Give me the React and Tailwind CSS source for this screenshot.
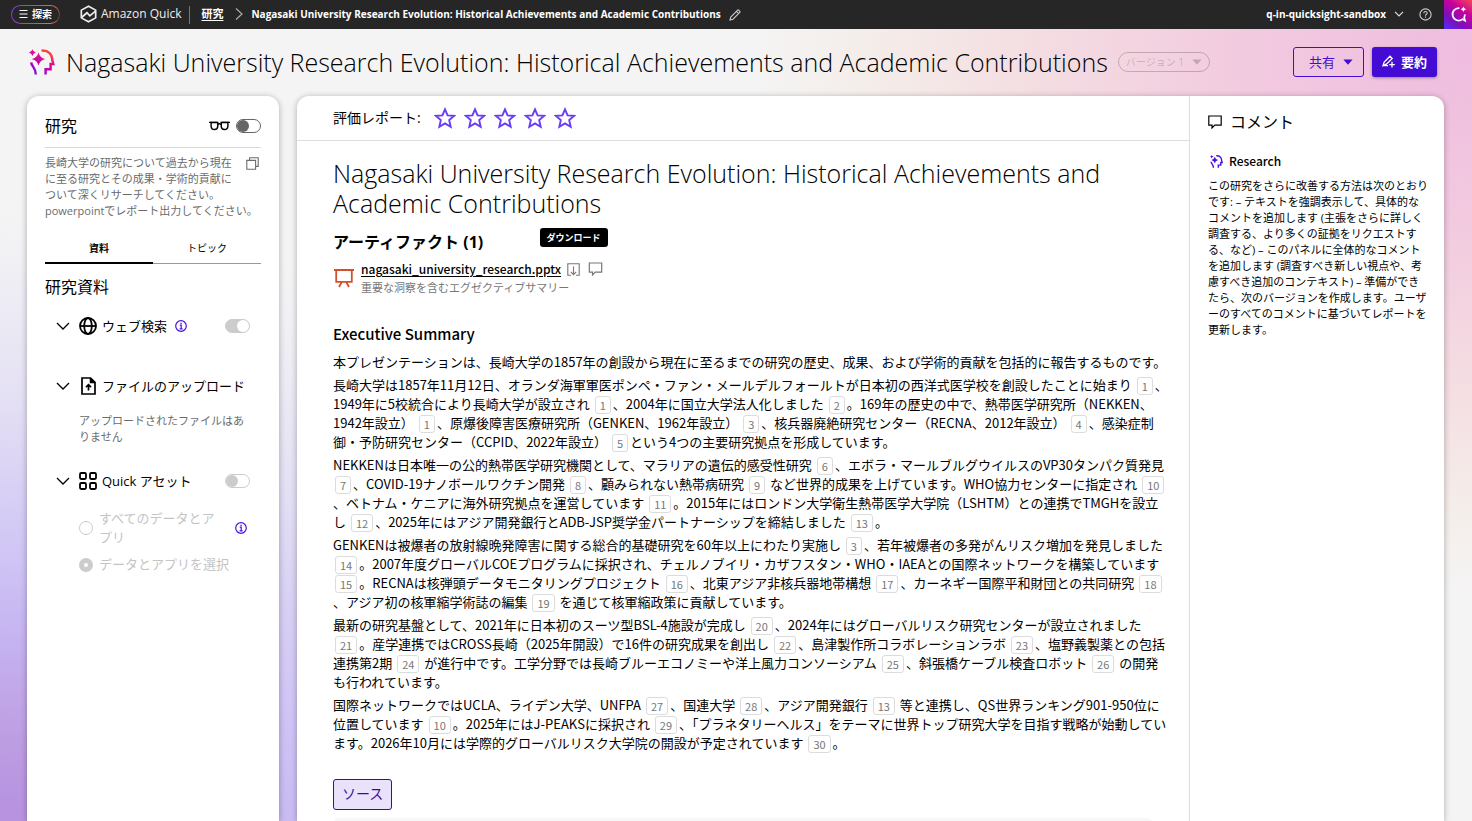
import React from "react";

const TITLE =
  "Nagasaki University Research Evolution: Historical Achievements and Academic Contributions";

// Each paragraph is a list of lines; [n] marks a citation chip.
const PARAGRAPHS = [
  [
    "本プレゼンテーションは、長崎大学の1857年の創設から現在に至るまでの研究の歴史、成果、および学術的貢献を包括的に報告するものです。",
  ],
  [
    "長崎大学は1857年11月12日、オランダ海軍軍医ポンペ・ファン・メールデルフォールトが日本初の西洋式医学校を創設したことに始まり [1]、",
    "1949年に5校統合により長崎大学が設立され [1]、2004年に国立大学法人化しました [2]。169年の歴史の中で、熱帯医学研究所（NEKKEN、",
    "1942年設立） [1]、原爆後障害医療研究所（GENKEN、1962年設立） [3]、核兵器廃絶研究センター（RECNA、2012年設立） [4]、感染症制",
    "御・予防研究センター（CCPID、2022年設立） [5]という4つの主要研究拠点を形成しています。",
  ],
  [
    "NEKKENは日本唯一の公的熱帯医学研究機関として、マラリアの遺伝的感受性研究 [6]、エボラ・マールブルグウイルスのVP30タンパク質発見",
    "[7]、COVID-19ナノボールワクチン開発 [8]、顧みられない熱帯病研究 [9] など世界的成果を上げています。WHO協力センターに指定され [10]",
    "、ベトナム・ケニアに海外研究拠点を運営しています [11]。2015年にはロンドン大学衛生熱帯医学大学院（LSHTM）との連携でTMGHを設立",
    "し [12]、2025年にはアジア開発銀行とADB-JSP奨学金パートナーシップを締結しました [13]。",
  ],
  [
    "GENKENは被爆者の放射線晩発障害に関する総合的基礎研究を60年以上にわたり実施し [3]、若年被爆者の多発がんリスク増加を発見しました",
    "[14]。2007年度グローバルCOEプログラムに採択され、チェルノブイリ・カザフスタン・WHO・IAEAとの国際ネットワークを構築しています",
    "[15]。RECNAは核弾頭データモニタリングプロジェクト [16]、北東アジア非核兵器地帯構想 [17]、カーネギー国際平和財団との共同研究 [18]",
    "、アジア初の核軍縮学術誌の編集 [19] を通じて核軍縮政策に貢献しています。",
  ],
  [
    "最新の研究基盤として、2021年に日本初のスーツ型BSL-4施設が完成し [20]、2024年にはグローバルリスク研究センターが設立されました",
    "[21]。産学連携ではCROSS長崎（2025年開設）で16件の研究成果を創出し [22]、島津製作所コラボレーションラボ [23]、塩野義製薬との包括",
    "連携第2期 [24] が進行中です。工学分野では長崎ブルーエコノミーや洋上風力コンソーシアム [25]、斜張橋ケーブル検査ロボット [26] の開発",
    "も行われています。",
  ],
  [
    "国際ネットワークではUCLA、ライデン大学、UNFPA [27]、国連大学 [28]、アジア開発銀行 [13] 等と連携し、QS世界ランキング901-950位に",
    "位置しています [10]。2025年にはJ-PEAKSに採択され [29]、「プラネタリーヘルス」をテーマに世界トップ研究大学を目指す戦略が始動してい",
    "ます。2026年10月には学際的グローバルリスク大学院の開設が予定されています [30]。",
  ],
];

const COMMENT_LINES = [
  "この研究をさらに改善する方法は次のとおり",
  "です: – テキストを強調表示して、具体的な",
  "コメントを追加します (主張をさらに詳しく",
  "調査する、より多くの証拠をリクエストす",
  "る、など) – このパネルに全体的なコメント",
  "を追加します (調査すべき新しい視点や、考",
  "慮すべき追加のコンテキスト) – 準備ができ",
  "たら、次のバージョンを作成します。ユーザ",
  "ーのすべてのコメントに基づいてレポートを",
  "更新します。",
];

function Svg({ w = 16, h, vb, sw = 1.5, className = "", children, stroke = "currentColor" }) {
  return (
    <svg
      width={w}
      height={h || w}
      viewBox={vb || `0 0 ${w} ${h || w}`}
      fill="none"
      stroke={stroke}
      strokeWidth={sw}
      className={`shrink-0 ${className}`}
      aria-hidden="true"
    >
      {children}
    </svg>
  );
}

function ResearchIcon({ size, paint, sw }) {
  return (
    <svg width={size} height={size} viewBox="0 0 26 26" fill="none" className="shrink-0" aria-hidden="true">
      <defs>
        <linearGradient id="headPaint" x1="4" y1="26" x2="20" y2="0" gradientUnits="userSpaceOnUse">
          <stop offset="0" stopColor="#5a1fe0" />
          <stop offset="0.35" stopColor="#b500c0" />
          <stop offset="0.65" stopColor="#e0108c" />
          <stop offset="0.85" stopColor="#ff4040" />
        </linearGradient>
      </defs>
      <g stroke={paint} strokeWidth={sw}>
        <path d="M12.5 1.6C19.5 1 23.4 5.6 23.2 10.8L24.4 15H21.6V20.2H16.6V25.5" />
        <path d="M2.2 13.4C2.4 17.6 6.8 18.4 6.8 25.5" />
      </g>
      <path fill={paint} d="M9.5 3.4Q10.8 8.7 16.2 10Q10.8 11.3 9.5 16.6Q8.2 11.3 2.8 10Q8.2 8.7 9.5 3.4Z" />
      <path fill={paint} d="M3.4 0.2Q4.1 2.9 6.9 3.6Q4.1 4.3 3.4 7Q2.7 4.3 0 3.6Q2.7 2.9 3.4 0.2Z" />
    </svg>
  );
}

const Chevron = ({ w = 14, h = 8, className = "" }) => (
  <Svg w={w} h={h} vb="0 0 14 8" sw={1.3} className={className}>
    <path d="M1 1l6 6 6-6" />
  </Svg>
);

const Caret = () => (
  <svg width="10" height="6" viewBox="0 0 10 6" fill="currentColor" className="shrink-0" aria-hidden="true">
    <path d="M0.4 0.4h9.2L5 5.8z" />
  </svg>
);

const InfoButton = () => (
  <button type="button" aria-label="情報" className="text-[#4a12e0]">
    <Svg w={12} vb="0 0 12 12" sw={1.2}>
      <circle cx="6" cy="6" r="5.3" />
      <path d="M4.8 5.2H6.2V8.8M4.6 8.8H7.6" />
      <path d="M5.4 3.3H6.7" />
    </Svg>
  </button>
);

const Speech = ({ w, h, className }) => (
  <Svg w={w} h={h} vb="0 0 14 14" sw={1.2} className={className}>
    <path d="M0.8 1h12.4v9.2H6.8L4 13V10.2H0.8z" />
  </Svg>
);

function Citation({ n }) {
  return (
    <button
      type="button"
      className="mx-0.5 -my-1 inline-flex h-[18px] items-center rounded-[3px] border border-[#dcdcdc] bg-white px-1 align-middle text-[11px] leading-4 text-[#777]"
    >
      {n}
    </button>
  );
}

function Line({ text }) {
  return text.split(/(\[\d+\])/).map((part, i) =>
    /^\[\d+\]$/.test(part) ? <Citation key={i} n={part.slice(1, -1)} /> : <React.Fragment key={i}>{part}</React.Fragment>
  );
}

function Lines({ lines }) {
  return lines.map((line, i) => (
    <React.Fragment key={i}>
      {i > 0 && <br />}
      <Line text={line} />
    </React.Fragment>
  ));
}

function TopBar() {
  return (
    <header className="flex h-[29px] shrink-0 items-center bg-[#262626] text-white">
      <button
        type="button"
        className="ml-[11px] rounded-full bg-[linear-gradient(100deg,#7a3fe0,#c040c8_50%,#e8705a_85%,#3a3030)] p-px"
      >
        <span className="flex h-[17px] items-center gap-1 rounded-full bg-[#262626] px-[7px] pb-px text-[10px] font-bold leading-4">
          <Svg w={9} h={8} sw={1}>
            <path d="M0.5 0.5h8M0.5 4h8M0.5 7.5h8" />
          </Svg>
          探索
        </span>
      </button>
      <a href="#home" className="ml-5 flex items-center gap-1 pb-0.5 text-[12px] leading-4 text-[#eee]">
        <Svg w={17} h={18} vb="0 0 18 19" sw={1.8}>
          <path d="M9 1.2L16.6 5.4V13.6L9 17.8L1.4 13.6V5.4Z" strokeLinejoin="round" />
          <path d="M1.6 13.2L7.4 8.2L10.4 11.4L16.4 6.4" />
        </Svg>
        Amazon Quick
      </a>
      <span className="ml-2 h-[18px] w-px bg-[#777]" />
      <nav aria-label="パンくずリスト" className="flex items-center pb-0.5">
        <a href="#research" className="ml-[11px] text-[11px] font-bold leading-4 underline underline-offset-2">
          研究
        </a>
        <Svg w={8} h={12} sw={1.2} className="ml-3 text-[#aaa]">
          <path d="M1 0.5l6 5.5-6 5.5" />
        </Svg>
        <span className="ml-2 text-[10px] font-bold leading-4">{TITLE}</span>
      </nav>
      <button type="button" aria-label="名前を編集" className="ml-2 text-[#ccc]">
        <Svg w={12} vb="0 0 12 12" sw={1.1}>
          <path d="M1 11l0.8-3L8.6 1.2a0.8 0.8 0 0 1 1.1 0l1.1 1.1a0.8 0.8 0 0 1 0 1.1L4 10.2zM7.4 2.4l2.2 2.2" />
        </Svg>
      </button>
      <button type="button" className="ml-auto flex items-center gap-2 pb-0.5 text-[10px] font-bold leading-4">
        q-in-quicksight-sandbox
        <Svg w={10} h={6} sw={1.2} className="text-[#ddd]">
          <path d="M1 0.8l4 4.2 4-4.2" />
        </Svg>
      </button>
      <button type="button" aria-label="ヘルプ" className="ml-[15px] text-[#ccc]">
        <Svg w={13} vb="0 0 13 13" sw={1.1}>
          <circle cx="6.5" cy="6.5" r="5.6" />
          <path d="M4.8 5.2C4.8 3 8.2 3 8.2 5C8.2 6.3 6.5 6.2 6.5 7.7M6.5 8.6V9.8" />
        </Svg>
      </button>
      <button
        type="button"
        aria-label="チャット"
        className="ml-3 flex h-full w-7 items-center justify-center bg-[linear-gradient(35deg,#5a2ae8_5%,#7a10c0_30%,#c8009c_65%,#f04060_95%)]"
      >
        <Svg w={17} vb="0 0 17 17" sw={1.7}>
          <path d="M9.4 2.2A6.2 6.2 0 1 0 12.6 13.2L15 14.6L14.2 11.4C14.7 10.4 14.9 9.6 14.8 8.4" />
          <path
            d="M13.4 0.4Q13.8 2.7 16.2 3.2Q13.8 3.7 13.4 6Q13 3.7 10.6 3.2Q13 2.7 13.4 0.4Z"
            fill="currentColor"
            stroke="none"
          />
        </Svg>
      </button>
    </header>
  );
}

const TOGGLE =
  "relative m-0 h-[14px] w-[25px] shrink-0 appearance-none rounded-full border before:absolute before:top-0 before:h-3 before:w-3 before:rounded-full before:content-['']";

function SourceHeader({ icon, label, children }) {
  return (
    <div className="flex h-6 items-center">
      <button type="button" aria-label={`${label}を折りたたむ`} className="mr-2 w-[14px]">
        <Chevron />
      </button>
      <span className="mr-1 flex w-5 shrink-0 justify-center">{icon}</span>
      <h3 className="mr-2 text-[13px] leading-5 whitespace-nowrap">{label}</h3>
      {children}
    </div>
  );
}

function ResearchPanel() {
  return (
    <aside className="w-[252px] shrink-0 rounded-t-xl bg-white px-[18px] pt-[18px] shadow-[0_1px_6px_rgba(0,0,0,0.3)]">
      <div className="flex h-[34px] items-start border-b border-[#d9d9d9]">
        <h2 className="flex-1 text-[16px] leading-6">研究</h2>
        <label className="flex h-6 items-center gap-1.5">
          <Svg w={21} h={10} vb="0 0 22 10" sw={1.5}>
            <path d="M0 1.2H8.6M13.4 1.2H22M8.8 3.4Q11 2 13.2 3.4" />
            <path d="M2.2 1.4H9.2V5.2Q9 8.6 5.8 8.6Q2.4 8.6 2.2 5.2ZM12.8 1.4H19.8V5.2Q19.6 8.6 16.2 8.6Q13 8.6 12.8 5.2Z" />
          </Svg>
          <input
            type="checkbox"
            aria-label="閲覧モード"
            className={`${TOGGLE} border-[#666] bg-white before:left-0 before:bg-[#666]`}
          />
        </label>
      </div>
      <div className="mt-[7px] text-[11px] leading-4 text-[#6b6b6b]">
        <button type="button" aria-label="コピー" className="float-right mr-[3px] ml-2 h-12 w-3">
          <Svg w={13} vb="0 0 13 13" sw={1.1} className="mb-8">
            <path d="M3.6 3V0.8H12.2V9.4H10M0.8 3.4H9.6V12.2H0.8Z" />
          </Svg>
        </button>
        長崎大学の研究について過去から現在に至る研究とその成果・学術的貢献について深くリサーチしてください。
        <br />
        <span className="whitespace-nowrap">powerpointでレポート出力してください。</span>
      </div>

      <div role="tablist" className="mt-3 flex text-[10px] leading-4">
        <button type="button" role="tab" aria-selected="true" className="flex-1 border-b-2 border-black pt-[9px] pb-1.5 font-bold">
          資料
        </button>
        <button type="button" role="tab" aria-selected="false" className="flex-1 border-b border-[#999] pt-[9px] pb-[7px]">
          トピック
        </button>
      </div>

      <h2 className="mt-[11px] text-[16px] leading-6">研究資料</h2>

      <div className="mt-[15px] pr-[11px] pl-[11px]">
        <SourceHeader
          label="ウェブ検索"
          icon={
            <Svg w={18} sw={1.8}>
              <circle cx="9" cy="9" r="8" />
              <ellipse cx="9" cy="9" rx="3.8" ry="8" />
              <path d="M1.4 9H16.6" />
            </Svg>
          }
        >
          <InfoButton />
          <input
            type="checkbox"
            defaultChecked
            disabled
            aria-label="ウェブ検索"
            className={`${TOGGLE} ml-auto border-[#ccc] bg-[#ccc] before:right-0 before:bg-white`}
          />
        </SourceHeader>

        <div className="mt-9">
          <SourceHeader
            label="ファイルのアップロード"
            icon={
              <Svg w={15} h={18} sw={1.7}>
                <path d="M1 1H9.6L14 5.4V17H1Z" />
                <path d="M9.6 1V5.4H14" fill="currentColor" />
                <path d="M7.5 13.4V8M5 10.2L7.5 7.7L10 10.2" />
              </Svg>
            }
          />
          <p className="mt-[15px] ml-[23px] text-[11px] leading-4 text-[#6b6b6b]">
            アップロードされたファイルはありません
          </p>
        </div>

        <div className="mt-6">
          <SourceHeader
            label="Quick アセット"
            icon={
              <Svg w={18} sw={1.8}>
                <rect x="1" y="1" width="6" height="6" rx="1.2" />
                <rect x="11" y="1" width="6" height="6" rx="1.2" />
                <rect x="1" y="11" width="6" height="6" rx="1.2" />
                <rect x="11" y="11" width="6" height="6" rx="1.2" />
              </Svg>
            }
          >
            <input
              type="checkbox"
              disabled
              aria-label="Quick アセット"
              className={`${TOGGLE} ml-auto border-[#ccc] bg-white before:left-0 before:bg-[#ccc]`}
            />
          </SourceHeader>
        </div>

        <fieldset className="mt-4 ml-[23px] text-[13px] leading-[19px] text-[#c4c4c4]">
          <div className="flex items-center">
            <label className="flex items-center gap-1.5">
              <input
                type="radio"
                name="assets"
                disabled
                className="m-0 h-[14px] w-[14px] shrink-0 appearance-none rounded-full border border-[#ccc]"
              />
              <span className="w-[122px]">すべてのデータとアプリ</span>
            </label>
            <span className="mr-[3px] ml-auto flex">
              <InfoButton />
            </span>
          </div>
          <label className="mt-2 flex items-center gap-1.5">
            <input
              type="radio"
              name="assets"
              disabled
              defaultChecked
              className="m-0 h-[14px] w-[14px] shrink-0 appearance-none rounded-full border-[5px] border-[#ccc] bg-white"
            />
            データとアプリを選択
          </label>
        </fieldset>
      </div>
    </aside>
  );
}

function Rating() {
  return (
    <div className="flex h-[45px] items-center border-b border-[#dedede] pl-9">
      <span className="mr-[13px] text-[14px] leading-5">評価レポート:</span>
      <div className="flex gap-2">
        {[1, 2, 3, 4, 5].map((n) => (
          <button key={n} type="button" aria-label={`星 ${n}`} className="text-[#6a3cf5]">
            <Svg w={22} vb="0 0 22 22" sw={1.9}>
              <path d="M11 2.4L13.6 8.4L20 8.9L15.2 13.1L16.7 19.8L11 16.4L5.3 19.8L6.8 13.1L2 8.9L8.4 8.4Z" />
            </Svg>
          </button>
        ))}
      </div>
    </div>
  );
}

function Report() {
  return (
    <article className="min-w-0 flex-1">
      <Rating />
      <div className="pt-[17px] pr-5 pl-9">
        <h1 className="max-w-[800px] text-[25px] font-light leading-[30px]">{TITLE}</h1>
        <h2 className="mt-3 text-[16px] font-bold leading-6">アーティファクト (1)</h2>
        <div className="mt-1.5 flex gap-1.5">
          <Svg w={22} h={20} sw={1.8} stroke="#d2502f" className="mt-2">
            <path d="M1 2H21M3.2 2V13.8H18.8V2" />
            <path d="M8.8 14L6 19M13.2 14L16 19" />
          </Svg>
          <div>
            <div className="flex h-[18px] items-center">
              <a
                href="#artifact"
                className="font-['Noto_Sans_CJK_JP',sans-serif] text-[12px] font-medium leading-[18px] underline underline-offset-2"
              >
                nagasaki_university_research.pptx
              </a>
              <span className="relative ml-1.5 flex">
                <button type="button" aria-label="ダウンロード" className="text-[#777]">
                  <Svg w={13} vb="0 0 13 13" sw={1.1}>
                    <path d="M4 12.2H0.8V0.8H12.2V12.2H9" />
                    <path d="M6.5 3.6V11.4M3.8 8.8L6.5 11.6L9.2 8.8" />
                  </Svg>
                </button>
                <span
                  role="tooltip"
                  className="absolute bottom-full left-1/2 mb-4 -translate-x-1/2 rounded-[3px] bg-black px-[7px] py-0.5 text-[9px] font-bold leading-[15px] whitespace-nowrap text-white"
                >
                  ダウンロード
                </span>
              </span>
              <button type="button" aria-label="コメントを追加" className="ml-2 text-[#777]">
                <Speech w={15} h={14} />
              </button>
            </div>
            <p className="mt-0.5 text-[11px] leading-4 text-[#777]">重要な洞察を含むエグゼクティブサマリー</p>
          </div>
        </div>

        <h2 className="mt-[26px] font-['Noto_Sans_CJK_JP',sans-serif] text-[15px] font-medium leading-6">
          Executive Summary
        </h2>
        <div className="mt-1.5 flex flex-col gap-1 font-['Noto_Sans_CJK_JP','Open_Sans',sans-serif] text-[13px] leading-[19px]">
          {PARAGRAPHS.map((lines, i) => (
            <p key={i}>
              <Lines lines={lines} />
            </p>
          ))}
        </div>

        <button
          type="button"
          className="mt-[27px] block rounded-[3px] border border-[#33109c] bg-[#e9e2fa] px-2 pt-[3px] pb-[5px] text-[14px] leading-[21px] text-[#33109c]"
        >
          ソース
        </button>
        <div className="mt-2 mr-4 h-10 rounded-t-md bg-[#f7f7f7]" />
      </div>
    </article>
  );
}

function Comments() {
  return (
    <section className="w-[255px] shrink-0 border-l border-[#dedede] pt-[14px] pr-2 pl-[18px]">
      <h2 className="flex items-center gap-2 text-[16px] leading-6">
        <Speech w={14} h={14} />
        コメント
      </h2>
      <h3 className="mt-[18px] flex items-center gap-1.5 font-['Noto_Sans_CJK_JP',sans-serif] text-[12px] font-medium leading-[18px]">
        <span className="ml-0.5 flex">
          <ResearchIcon size={13} paint="#4a12e0" sw={2.8} />
        </span>
        Research
      </h3>
      <p className="mt-2 text-[11px] leading-4 whitespace-nowrap">
        <Lines lines={COMMENT_LINES} />
      </p>
    </section>
  );
}

export default function App() {
  return (
    <div
      lang="ja"
      className="flex h-screen flex-col overflow-hidden bg-[#f4f4f4] font-['Open_Sans','Noto_Sans_CJK_JP',sans-serif] text-black"
    >
      <TopBar />
      <main className="flex min-h-0 flex-1 flex-col bg-[radial-gradient(ellipse_720px_540px_at_100%_3%,#efbcdf_0%,#f2cadf_32%,#f4dee2_62%,#f4eeea_85%,rgba(244,244,244,0)_100%),radial-gradient(circle_at_0_110%,#b890de_0,#b894e0_100px,#be9fe3_170px,#c5b3f0_260px,#cfc4f5_340px,#e5e1f4_507px,#f1f0f4_640px,#f4f4f4_700px)]">
        <div className="flex h-[67px] shrink-0 items-center pr-[35px] pb-0.5 pl-[29px]">
          <ResearchIcon size={26} paint="url(#headPaint)" sw={2.4} />
          <p className="ml-[11px] text-[25px] font-light leading-8 whitespace-nowrap">{TITLE}</p>
          <button
            type="button"
            disabled
            className="ml-[10px] flex h-5 items-center gap-2 rounded-full border border-[#000]/20 px-[7px] text-[10px] leading-4 text-[#000]/20"
          >
            バージョン 1
            <Caret />
          </button>
          <button
            type="button"
            className="ml-auto flex h-[30px] items-center gap-2 rounded-[3px] border border-[#440bd4] pr-[10px] pl-[15px] text-[13px] leading-5 text-[#440bd4]"
          >
            共有
            <Caret />
          </button>
          <button
            type="button"
            className="ml-2 flex h-[30px] items-center gap-1.5 rounded-[3px] bg-[#440bd4] px-[10px] text-[13px] font-bold leading-5 text-white shadow-[0_1px_3px_rgba(0,0,0,0.35)]"
          >
            <Svg w={13} vb="0 0 13 13" sw={1.3}>
              <path d="M1 10.6L2.2 7L8 1.2L10.2 3.4L4.4 9.2ZM1 10.6H6" />
              <path d="M10 6.8V12.4M7.2 9.6H12.8" />
            </Svg>
            要約
          </button>
        </div>
        <div className="flex min-h-0 flex-1 gap-[18px] pr-7 pl-[27px]">
          <ResearchPanel />
          <div className="flex min-w-0 flex-1 rounded-t-xl bg-white shadow-[0_1px_6px_rgba(0,0,0,0.3)]">
            <Report />
            <Comments />
          </div>
        </div>
      </main>
    </div>
  );
}
